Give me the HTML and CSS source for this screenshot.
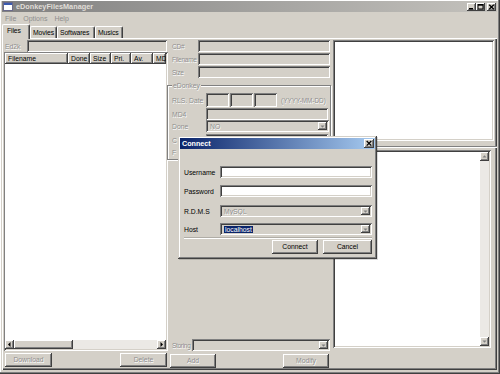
FILE: index.html
```html
<!DOCTYPE html>
<html>
<head>
<meta charset="utf-8">
<title>eDonkeyFilesManager</title>
<link rel="stylesheet" href="styles.css">
</head>
<body>
<div class="window">
  <div class="titlebar">
    <svg class="appicon" width="10" height="9" viewBox="0 0 10 9"><rect x="0.5" y="0.5" width="9" height="8" fill="#fff" stroke="#6a6a8a"/><rect x="1" y="1" width="8" height="2" fill="#3a5ab0"/></svg>
    <span class="title">eDonkeyFilesManager</span>
    <div class="tbtns">
      <span class="tbtn"><svg width="9" height="8" viewBox="0 0 9 8"><rect x="2" y="5" width="4" height="1.5" fill="#000"/></svg></span>
      <span class="tbtn"><svg width="9" height="8" viewBox="0 0 9 8"><rect x="2" y="1.5" width="5" height="4.5" fill="none" stroke="#000" stroke-width="1"/><rect x="2" y="1.5" width="5" height="1.2" fill="#000"/></svg></span>
      <span class="tbtn close"><svg width="9" height="8" viewBox="0 0 9 8"><path d="M2.2 1.8 L6.8 6.2 M6.8 1.8 L2.2 6.2" stroke="#000" stroke-width="1.3"/></svg></span>
    </div>
  </div>
  <div class="menubar"><span>File</span><span>Options</span><span>Help</span></div>
  <div class="tabs">
    <span class="tab active t-files">Files</span>
    <span class="tab t-movies">Movies</span>
    <span class="tab t-soft">Softwares</span>
    <span class="tab t-music">Musics</span>
  </div>
  <div class="panel">
    <div class="col left">
      <div class="row ed2k"><span class="lbl dis l-ed2k">Ed2k</span><div class="field sunken disbg grow"></div></div>
      <div class="list sunken">
        <div class="lhead">
          <span class="hcell c1">Filename</span>
          <span class="hcell c2">Done</span>
          <span class="hcell c3">Size</span>
          <span class="hcell c4">Pri.</span>
          <span class="hcell c5">Av.</span>
          <span class="hcell c6">MD</span>
        </div>
        <div class="lbody"></div>
        <div class="hscroll">
          <span class="sbtn"><svg width="9" height="9" viewBox="0 0 9 9"><path d="M3 4.5 L5.5 2 L5.5 7 Z" fill="#000"/></svg></span>
          <span class="sbtn thumb"></span>
          <span class="track"></span>
          <span class="sbtn"><svg width="9" height="9" viewBox="0 0 9 9"><path d="M6 4.5 L3.5 2 L3.5 7 Z" fill="#000"/></svg></span>
        </div>
      </div>
      <div class="btnrow">
        <span class="btn dis">Download</span>
        <span class="btn dis">Delete</span>
      </div>
    </div>

    <div class="col mid">
      <div class="row mrow"><span class="lbl dis l-mid">CD#</span><div class="field sunken disbg mfield"></div></div>
      <div class="row mrow gap1"><span class="lbl dis l-mid">Filename</span><div class="field sunken disbg mfield"></div></div>
      <div class="row mrow gap1"><span class="lbl dis l-mid">Size</span><div class="field sunken disbg mfield"></div></div>

      <div class="group">
        <span class="legend dis">eDonkey</span>
        <div class="row grow1"><span class="lbl dis l-grp">RLS. Date</span>
          <div class="field sunken disbg datebox"></div>
          <div class="field sunken disbg datebox"></div>
          <div class="field sunken disbg datebox"></div>
          <span class="dis datehint">(YYYY-MM-DD)</span>
        </div>
        <div class="row grow2"><span class="lbl dis l-grp">MD4</span><div class="field sunken disbg gfield"></div></div>
        <div class="row grow3"><span class="lbl dis l-grp">Done</span>
          <div class="field sunken disbg gfield select"><span class="seltext dis">NO</span><span class="ddbtn"><svg width="7" height="7" viewBox="0 0 7 7"><path d="M1.5 2.5 L5.5 2.5 L3.5 4.8 Z" fill="#808080"/></svg></span></div>
        </div>
        <div class="row grow4"><span class="lbl dis l-grp">C</span><div class="field sunken disbg gfield"></div></div>
        <div class="row grow5"><span class="lbl dis l-grp">F</span><div class="field sunken disbg gfield"></div></div>
      </div>

      <div class="row storing"><span class="lbl dis l-store">Storing</span>
        <div class="field sunken disbg select sfield"><span class="seltext"></span><span class="ddbtn"><svg width="7" height="7" viewBox="0 0 7 7"><path d="M1.5 2.5 L5.5 2.5 L3.5 4.8 Z" fill="#808080"/></svg></span></div>
      </div>
      <div class="btnrow midbtns">
        <span class="btn dis">Add</span>
        <span class="btn dis">Modify</span>
      </div>
    </div>

    <div class="col right">
      <div class="preview sunken"></div>
      <div class="divider"></div>
      <div class="textarea sunken">
        <div class="tbody"></div>
        <div class="vscroll">
          <span class="sbtn"><svg width="9" height="9" viewBox="0 0 9 9"><path d="M2.5 5.5 L6.5 5.5 L4.5 3.3 Z" fill="#808080"/></svg></span>
          <span class="vtrack"></span>
          <span class="sbtn"><svg width="9" height="9" viewBox="0 0 9 9"><path d="M2.5 3.5 L6.5 3.5 L4.5 5.7 Z" fill="#808080"/></svg></span>
        </div>
      </div>
    </div>
  </div>

  <div class="dialog">
    <div class="dtitle"><span>Connect</span>
      <span class="dclose"><svg width="10" height="9" viewBox="0 0 10 9"><path d="M2.7 2 L7.3 6.6 M7.3 2 L2.7 6.6" stroke="#000" stroke-width="1.3"/></svg></span>
    </div>
    <div class="dbody">
      <div class="row drow d1"><span class="dlbl">Username</span><div class="field sunken dfield"></div></div>
      <div class="row drow d2"><span class="dlbl">Password</span><div class="field sunken dfield"></div></div>
      <div class="row drow d3"><span class="dlbl">R.D.M.S</span>
        <div class="field sunken disbg dfield select"><span class="seltext dis">MySQL</span><span class="ddbtn"><svg width="7" height="7" viewBox="0 0 7 7"><path d="M1.5 2.5 L5.5 2.5 L3.5 4.8 Z" fill="#808080"/></svg></span></div>
      </div>
      <div class="row drow d4"><span class="dlbl">Host</span>
        <div class="field sunken disbg dfield select"><span class="seltext"><span class="hl">localhost</span></span><span class="ddbtn"><svg width="7" height="7" viewBox="0 0 7 7"><path d="M1.5 2.5 L5.5 2.5 L3.5 4.8 Z" fill="#808080"/></svg></span></div>
      </div>
      <div class="dsep"></div>
      <div class="dbtns">
        <span class="btn dbtn-connect">Connect</span>
        <span class="btn dbtn-cancel">Cancel</span>
      </div>
    </div>
  </div>
</div>
</body>
</html>
```

FILE: styles.css
```css
* { box-sizing: border-box; margin: 0; padding: 0; }
html, body { width: 500px; height: 374px; overflow: hidden; }
body {
  background: #d4d0c8;
  font-family: "Liberation Sans", Arial, sans-serif;
  font-size: 6.8px;
  color: #000;
}

.sunken {
  background: #fff;
  box-shadow: inset 1px 1px #808080, inset -1px -1px #fff, inset 2px 2px #404040, inset -2px -2px #d4d0c8;
}
.disbg { background: #d4d0c8; }
.dis { color: #8e8e8e; text-shadow: 0.6px 0.6px #fff; }

.window {
  position: relative;
  width: 500px;
  height: 374px;
  padding: 1px 3px 4px 2px;
  display: flex;
  flex-direction: column;
  box-shadow: inset -1px -1px #404040, inset -2px -2px #808080, inset 1px 1px #fff;
}

.titlebar {
  height: 11px;
  flex: none;
  background: linear-gradient(to right, #808080, #c4c2bd);
  display: flex;
  align-items: center;
  padding: 0 1px 0 1px;
}
.appicon { flex: none; margin-right: 3px; }
.title { flex: 1; font-weight: bold; font-size: 7.3px; color: #e0ded8; }
.tbtns { display: flex; align-items: center; }
.tbtn {
  width: 9px; height: 8px;
  background: #d4d0c8;
  box-shadow: inset -1px -1px #404040, inset 1px 1px #fff, inset -2px -2px #808080;
  display: flex;
}
.tbtn.close { margin-left: 2px; }

.menubar {
  height: 12px;
  flex: none;
  display: flex;
  align-items: center;
  gap: 7px;
  padding-left: 3px;
  color: #8e8e8e;
  font-size: 7px;
}

.tabs {
  height: 14px;
  flex: none;
  display: flex;
  align-items: flex-end;
}
.tab {
  height: 12px;
  padding: 2px 0 0 2px;
  border-top: 1px solid #fff;
  border-left: 1px solid #fff;
  border-right: 1px solid #404040;
  border-radius: 2px 2px 0 0;
  box-shadow: inset -1px 0 #808080;
  font-size: 6.8px;
  letter-spacing: -0.1px;
  white-space: nowrap;
  flex: none;
}
.tab.active {
  height: 15px;
  margin-bottom: -1px;
  padding: 2px 0 0 4px;
  background: #d4d0c8;
  position: relative;
  z-index: 1;
}
.t-files { width: 28px; }
.t-movies { width: 27px; }
.t-soft { width: 38px; }
.t-music { width: 28px; }

.panel {
  flex: 1;
  min-height: 0;
  display: grid;
  grid-template-columns: 164px 165px 1fr;
  padding: 2px 3px 2px 2px;
  box-shadow: inset 1px 1px #fff, inset -1px -1px #404040, inset -2px -2px #808080;
}

.col { display: flex; flex-direction: column; min-height: 0; }
.row { display: flex; align-items: center; flex: none; }
.lbl { flex: none; white-space: nowrap; }
.field { height: 12px; }
.grow { flex: 1; }

/* left column */
.ed2k { height: 12px; }
.l-ed2k { width: 23px; padding-left: 1px; }
.ed2k .field { margin-right: 1px; }
.list {
  height: 299px;
  display: flex;
  flex-direction: column;
  padding: 1px 2px 2px 1px;
}
.lhead { height: 11px; display: flex; flex: none; }
.hcell {
  height: 11px;
  line-height: 11px;
  padding-left: 3px;
  background: #d4d0c8;
  box-shadow: inset -1px -1px #404040, inset 1px 1px #fff, inset -2px -2px #808080;
  white-space: nowrap;
  overflow: hidden;
}
.c1 { width: 63px; }
.c2 { width: 22px; }
.c3 { width: 21px; }
.c4 { width: 20px; }
.c5 { width: 22px; }
.c6 { flex: 1; }
.lbody { flex: 1; background: #fff; }
.hscroll { height: 9px; display: flex; flex: none; }
.sbtn {
  width: 9px; height: 9px; flex: none;
  background: #d4d0c8;
  box-shadow: inset -1px -1px #404040, inset 1px 1px #fff, inset -2px -2px #808080;
  display: flex;
}
.sbtn.thumb { width: 59px; }
.track { flex: 1; background: #ebe9e5; }

.btnrow {
  height: 14px;
  margin-top: 2px;
  display: flex;
  justify-content: space-between;
  padding: 0 1px;
  flex: none;
}
.btn {
  width: 47px;
  height: 14px;
  line-height: 14px;
  text-align: center;
  background: #d4d0c8;
  box-shadow: inset -1px -1px #404040, inset 1px 1px #fff, inset -2px -2px #808080;
}

/* middle column */
.mrow { height: 12px; padding-left: 4px; }
.gap1 { margin-top: 1px; }
.l-mid { width: 26px; letter-spacing: -0.25px; font-size: 6.5px; }
.mfield { width: 132px; }

.group {
  margin: 7px 2px 0 -1px;
  height: 75px;
  border: 1px solid #808080;
  box-shadow: inset 1px 1px #fff, 1px 1px #fff;
  padding-left: 4px;
}
.legend {
  display: block;
  width: max-content;
  height: 9px;
  line-height: 9px;
  margin: -5px 0 0 0;
  padding: 0 1px;
  background: #d4d0c8;
}
.l-grp { width: 34px; }
.grow1 { height: 14px; margin-top: 3px; }
.grow1 .datebox { height: 14px; width: 23px; margin-right: 1px; }
.datehint { margin-left: 3px; white-space: nowrap; font-size: 6.4px; }
.grow2 { height: 12px; margin-top: 1px; }
.grow3 { height: 12px; margin-top: 0; }
.grow4 { height: 12px; margin-top: 2px; }
.grow5 { height: 11px; margin-top: 1px; }
.gfield { width: 122px; }
.grow3 .gfield { width: 123px; }

.select { display: flex; align-items: center; padding: 2px; }
.seltext { flex: 1; padding-left: 2px; white-space: nowrap; overflow: hidden; }
.ddbtn {
  width: 9px; height: 8px; flex: none;
  background: #d4d0c8;
  box-shadow: inset -1px -1px #404040, inset 1px 1px #fff, inset -2px -2px #808080;
  display: flex; align-items: center; justify-content: center;
}

.storing { margin-top: auto; height: 12px; padding-left: 4px; }
.l-store { width: 20px; letter-spacing: -0.3px; font-size: 6.5px; }
.sfield { width: 138px; }
.midbtns { margin-top: 3px; padding: 0 4px 0 2px; }
.midbtns .btn { width: 46px; }

/* right column */
.preview { height: 101px; flex: none; }
.divider {
  margin: 5px -3px 0 -3px;
  height: 2px;
  border-top: 1px solid #808080;
  border-bottom: 1px solid #fff;
  flex: none;
}
.textarea {
  margin-top: 2px;
  height: 198px;
  margin-right: 3px;
  display: flex;
  padding: 2px;
}
.tbody { flex: 1; background: #fff; }
.vscroll { width: 9px; display: flex; flex-direction: column; }
.vtrack { flex: 1; background: #ebe9e5; }

/* dialog */
.dialog {
  position: absolute;
  left: 178px;
  top: 136px;
  width: 199px;
  height: 123px;
  background: #d4d0c8;
  box-shadow: inset -1px -1px #404040, inset 1px 1px #d4d0c8, inset -2px -2px #808080, inset 2px 2px #fff, 1px 1px 0 rgba(0,0,0,0.15);
  padding: 2px;
  display: flex;
  flex-direction: column;
}
.dtitle {
  height: 11px;
  flex: none;
  background: linear-gradient(to right, #0a246a, #a6caf0);
  color: #fff;
  font-weight: bold;
  font-size: 7.2px;
  display: flex;
  align-items: center;
  justify-content: space-between;
  padding: 0 1px 0 2px;
}
.dclose {
  width: 10px; height: 9px;
  background: #d4d0c8;
  box-shadow: inset -1px -1px #404040, inset 1px 1px #fff, inset -2px -2px #808080;
  display: flex;
}
.dbody { flex: 1; display: flex; flex-direction: column; padding: 0 3px 0 4px; }
.drow { height: 12px; }
.dlbl { width: 36px; flex: none; white-space: nowrap; }
.dfield { flex: 1; }
.d1 { margin-top: 17px; }
.d2 { margin-top: 7px; }
.d3 { margin-top: 8px; }
.d4 { margin-top: 6px; }
.hl { background: #0a246a; color: #fff; padding: 0 1px; }
.dsep {
  margin-top: 2px;
  height: 2px;
  border-top: 1px solid #b0ada6;
  border-bottom: 1px solid #fff;
  flex: none;
}
.dbtns { margin-top: 1px; display: flex; justify-content: flex-end; gap: 5px; }
.dbtn-connect { width: 46px; }
.dbtn-cancel { width: 49px; }
```
